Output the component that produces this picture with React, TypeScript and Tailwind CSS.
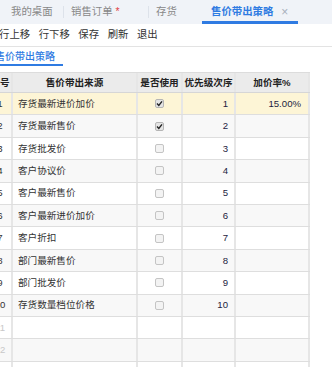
import React from "react";

// rows of the price strategy grid
const rows = [
  { src: "存货最新进价加价", on: true, rate: "15.00%" },
  { src: "存货最新售价", on: true, rate: "" },
  { src: "存货批发价", on: false, rate: "" },
  { src: "客户协议价", on: false, rate: "" },
  { src: "客户最新售价", on: false, rate: "" },
  { src: "客户最新进价加价", on: false, rate: "" },
  { src: "客户折扣", on: false, rate: "" },
  { src: "部门最新售价", on: false, rate: "" },
  { src: "部门批发价", on: false, rate: "" },
  { src: "存货数量档位价格", on: false, rate: "" },
];

const font = "font-['Liberation_Sans','Noto_Sans_CJK_SC',sans-serif]";

function Check({ on }: { on: boolean }) {
  if (on) {
    return (
      <div className="w-[9px] h-[9px] rounded-[2px] border border-[#b5b5b5] bg-[#e4e4e4] flex items-center justify-center">
        <svg width="7" height="7" viewBox="0 0 7 7">
          <path d="M1 3.6 L2.8 5.4 L6 1.4" fill="none" stroke="#222" strokeWidth="1.4" />
        </svg>
      </div>
    );
  }
  return <div className="w-[9px] h-[9px] rounded-[2px] border border-[#c4c4c4] bg-[#f3f3f3]" />;
}

const cols = "grid grid-cols-[28px_125px_45px_53px_74px]";
const cell = "border-r-2 border-r-[#e6e6e6] flex items-center";

export default function App() {
  return (
    <div className={`w-[332px] h-[367px] overflow-hidden bg-white text-[#333] ${font}`}>
      {/* top tabs */}
      <div className="h-[24px] bg-[#f0f3f8] flex items-center text-[10.4px] leading-none text-[#888]">
        <div className="w-[63px] pl-[11px]">我的桌面</div>
        <div className="w-px h-[12px] bg-[#dde2ea]" />
        <div className="w-[84px] pl-[7px]">
          销售订单 <span className="text-[#e04040]">*</span>
        </div>
        <div className="w-px h-[12px] bg-[#dde2ea]" />
        <div className="w-[53px] pl-[7px]">存货</div>
        <div className="relative h-full w-[96px] flex items-center pl-[9px] gap-[8px] text-[#2f7be2] font-bold">
          <span>售价带出策略</span>
          <span className="text-[#a8b0bc] font-normal text-[12px]">×</span>
          <div className="absolute left-0 right-0 bottom-0 h-[3px] bg-[#2f7be2]" />
        </div>
      </div>

      {/* toolbar */}
      <div className="h-[23px] border-b border-[#e3e3e3] flex items-center gap-[8.5px] -ml-[1px] text-[10.4px] leading-none text-[#333]">
        <span>行上移</span>
        <span>行下移</span>
        <span>保存</span>
        <span>刷新</span>
        <span>退出</span>
      </div>

      {/* sub tab */}
      <div className="h-[19px] flex items-end">
        <div className="relative w-[63px] h-full flex items-center text-[10px] leading-none text-[#2f7be2] font-medium">
          <span className="-ml-[5px] whitespace-nowrap">售价带出策略</span>
          <div className="absolute left-0 right-0 bottom-0 h-[2px] bg-[#2f7be2]" />
        </div>
      </div>

      {/* grid */}
      <div className="mt-[6px] -ml-[15px] w-[325px] text-[9.6px] leading-none">
        <div className={`${cols} h-[21px] bg-[#ebebeb] border-t border-[#dcdcdc] border-b border-b-[#d6d6d6] font-bold text-[#222]`}>
          <div className={`${cell} justify-center pl-[4px]`}>行号</div>
          <div className={`${cell} justify-center`}>售价带出来源</div>
          <div className={`${cell} justify-center`}>是否使用</div>
          <div className={`${cell} justify-center`}>优先级次序</div>
          <div className={`${cell} justify-center`}>加价率%</div>
        </div>
        {rows.map((r, i) => (
          <div
            key={r.src}
            className={`${cols} h-[22.4px] border-b border-[#dedede] ${
              i === 0 ? "bg-[#fdf5d6]" : i % 2 === 1 ? "bg-[#f8f8f8]" : "bg-white"
            }`}
          >
            <div className={`${cell} justify-center pl-[4px]`}>{i + 1}</div>
            <div className={`${cell} pl-[5px]`}>{r.src}</div>
            <div className={`${cell} justify-center`}>
              <Check on={r.on} />
            </div>
            <div className={`${cell} justify-end pr-[6px] text-[#1c1c40]`}>{i + 1}</div>
            <div className={`${cell} justify-end pr-[7px] text-[#1c1c40]`}>{r.rate}</div>
          </div>
        ))}
        {[11, 12, 13].map((n) => (
          <div
            key={n}
            className={`${cols} h-[22.4px] border-b border-[#dedede] ${n % 2 === 0 ? "bg-[#f8f8f8]" : "bg-white"}`}
          >
            <div className={`${cell} justify-center pl-[4px] text-[#c8c8c8]`}>{n}</div>
            <div className={cell} />
            <div className={cell} />
            <div className={cell} />
            <div className={cell} />
          </div>
        ))}
      </div>
    </div>
  );
}
